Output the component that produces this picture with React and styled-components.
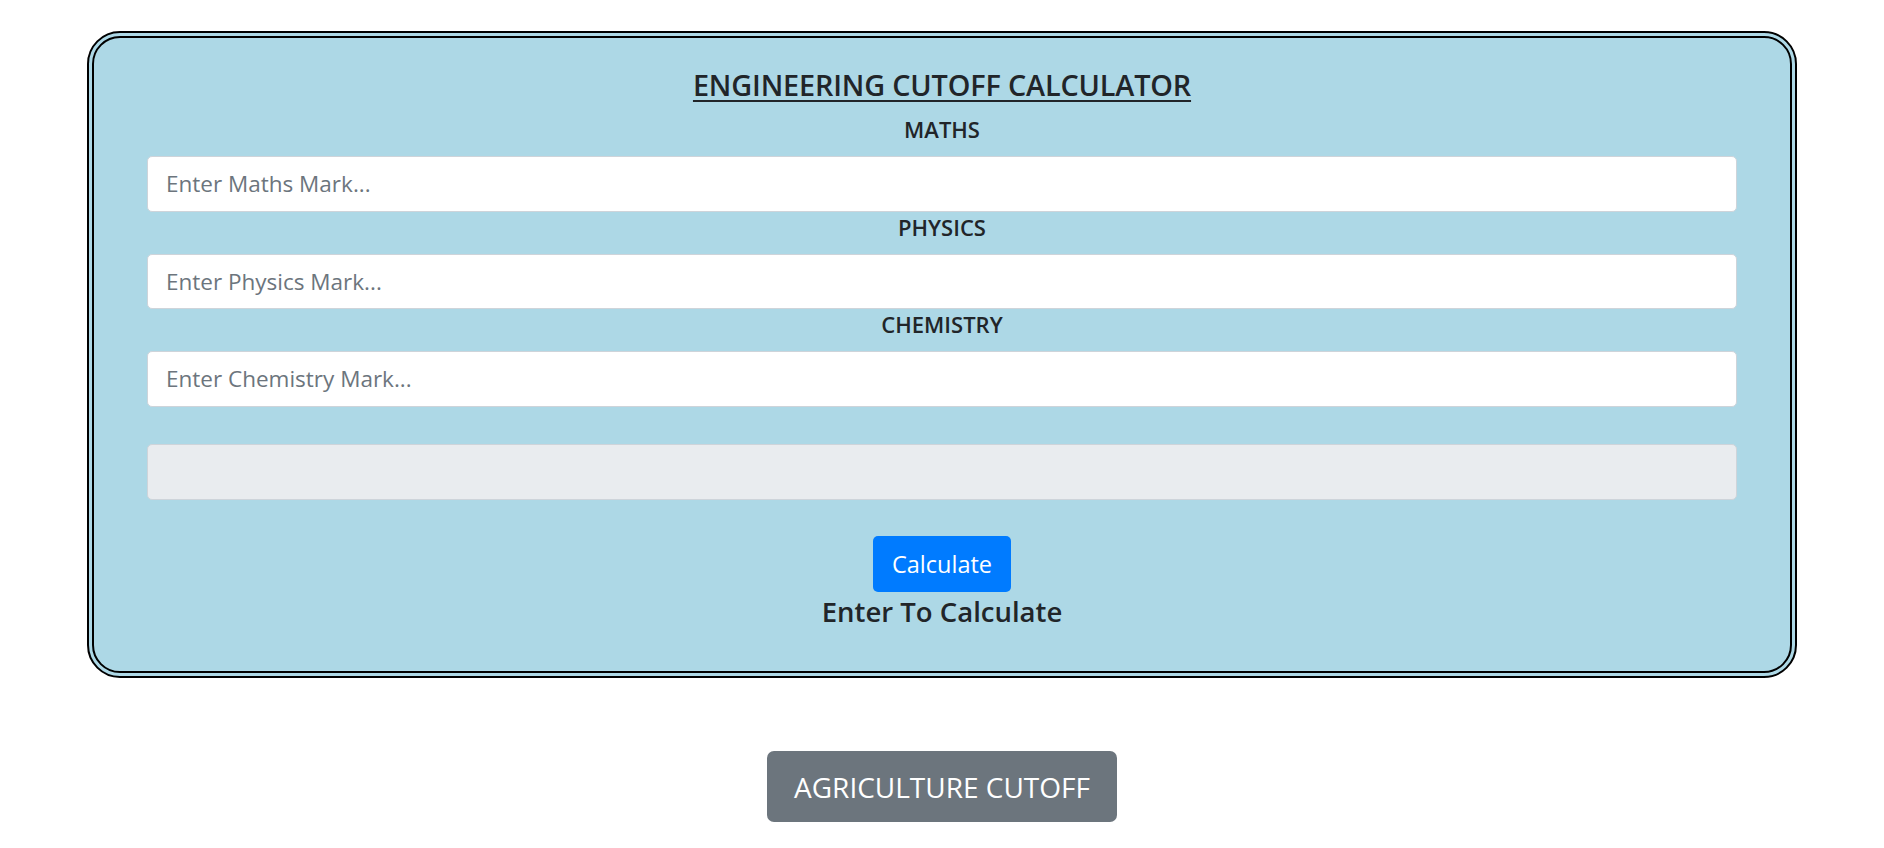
import React, { useState } from 'react';
import styled, { createGlobalStyle } from 'styled-components';

const GlobalStyle = createGlobalStyle`
  body {
    margin: 0;
    background: #ffffff;
    font-family: "Open Sans", "Noto Sans", "Liberation Sans", sans-serif;
    color: #212529;
  }
  * {
    box-sizing: border-box;
  }
`;

const Page = styled.div`
  display: flex;
  flex-direction: column;
  align-items: center;
  padding: 31px 87px 0;
`;

const Card = styled.div`
  width: 100%;
  background: #add8e6;
  border: 7px double #000;
  border-radius: 33px;
  padding: 29px 53px 44px;
  display: flex;
  flex-direction: column;
  align-items: center;
  text-align: center;
`;

const Title = styled.h3`
  margin: 0 0 11px;
  font-size: 28.8px;
  line-height: 36px;
  font-weight: 600;
  letter-spacing: -0.15px;
  text-decoration: underline;
  text-decoration-thickness: 2px;
  text-underline-offset: 4px;
`;

const Label = styled.label`
  display: block;
  margin: 0 0 12px;
  font-size: 22px;
  line-height: 30px;
  font-weight: 600;
`;

const Field = styled.div`
  width: 100%;
`;

const Input = styled.input`
  display: block;
  width: 100%;
  height: 55.5px;
  padding: 0 18px;
  font-family: inherit;
  font-size: 22.5px;
  color: #495057;
  background: ${props => (props.disabled ? '#e9ecef' : '#ffffff')};
  border: 1px solid #ced4da;
  border-radius: 5px;
  outline: none;
  margin-top: ${props => props.gap || 0}px;

  &::placeholder {
    color: #6c757d;
  }
`;

const Button = styled.button`
  font-family: inherit;
  color: #ffffff;
  border: none;
  cursor: pointer;
  background: ${props => props.bg};
  font-size: ${props => props.size}px;
  height: ${props => props.h}px;
  padding: 0 ${props => props.px}px;
  border-radius: ${props => props.radius}px;
  margin-top: ${props => props.gap}px;
`;

const Status = styled.div`
  font-size: 27.5px;
  line-height: 31px;
  font-weight: 600;
  margin-top: 4px;
`;

const subjects = [
  { name: 'MATHS', placeholder: 'Enter Maths Mark...' },
  { name: 'PHYSICS', placeholder: 'Enter Physics Mark...' },
  { name: 'CHEMISTRY', placeholder: 'Enter Chemistry Mark...' },
];

const App = () => {
  const [marks, setMarks] = useState({});
  const [result, setResult] = useState('');

  const calculate = () => {
    const m = parseFloat(marks.MATHS) || 0;
    const p = parseFloat(marks.PHYSICS) || 0;
    const c = parseFloat(marks.CHEMISTRY) || 0;
    setResult(String(m + p / 2 + c / 2));
  };

  return (
    <>
      <GlobalStyle />
      <Page>
        <Card>
          <Title>ENGINEERING CUTOFF CALCULATOR</Title>
          {subjects.map(s => (
            <Field key={s.name}>
              <Label>{s.name}</Label>
              <Input
                placeholder={s.placeholder}
                value={marks[s.name] || ''}
                onChange={e => setMarks({ ...marks, [s.name]: e.target.value })}
              />
            </Field>
          ))}
          <Input disabled value={result} gap={37.6} />
          <Button bg="#007bff" size={23.5} h={56} px={19} radius={5} gap={36.5} onClick={calculate}>
            Calculate
          </Button>
          <Status>Enter To Calculate</Status>
        </Card>
        <Button bg="#6c757d" size={28} h={71} px={27} radius={7} gap={73}>
          AGRICULTURE CUTOFF
        </Button>
      </Page>
    </>
  );
};

export default App;
